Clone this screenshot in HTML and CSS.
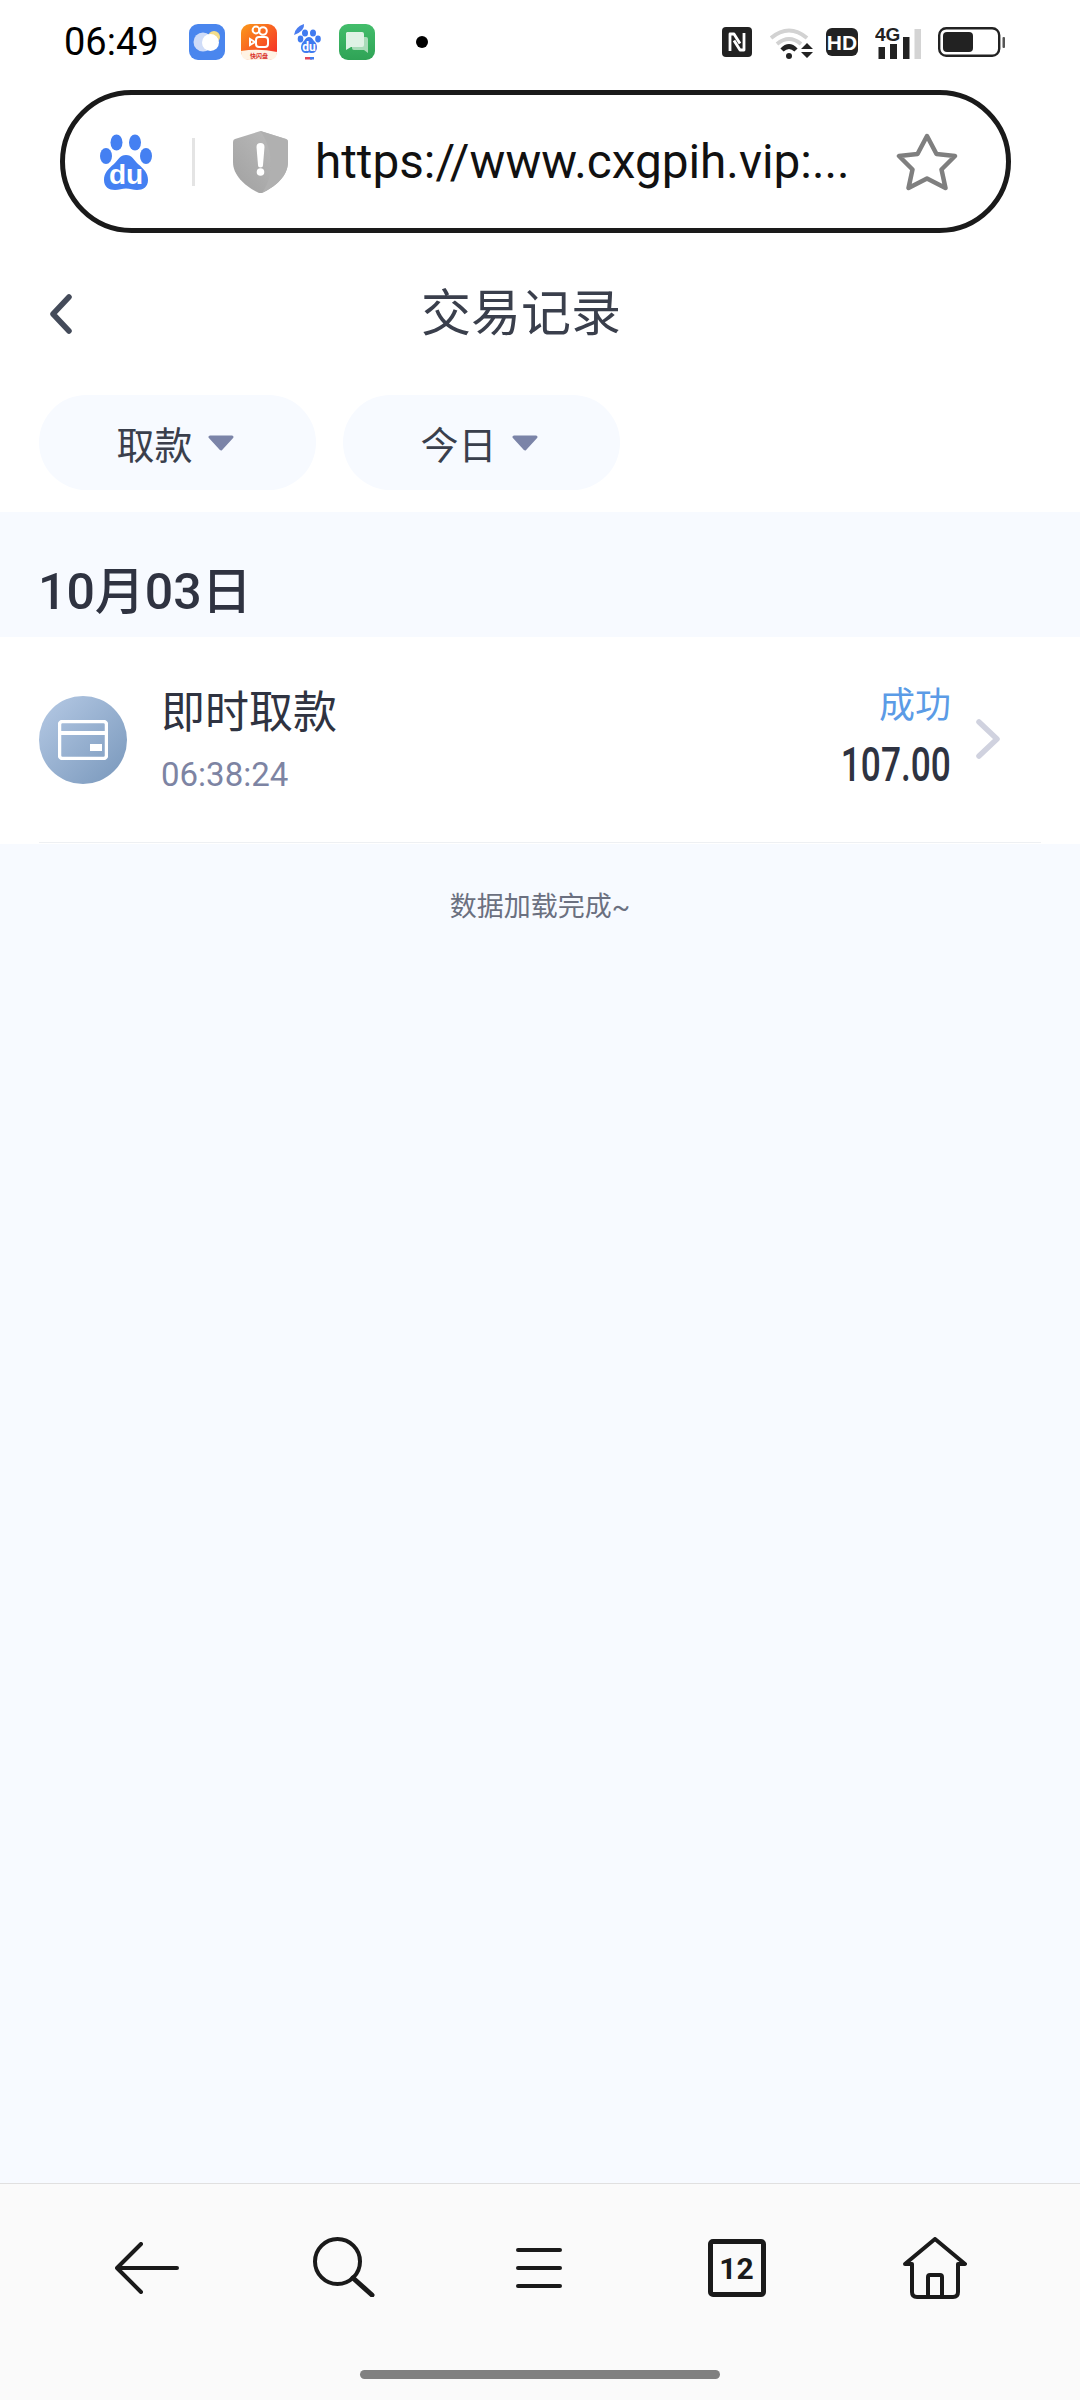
FILE: index.html
```html
<!DOCTYPE html>
<html lang="zh-CN">
<head>
<meta charset="utf-8">
<title>交易记录</title>
<link rel="stylesheet" href="styles.css">
</head>
<body>
<div class="page">
  <div class="status">
    <span class="clock">06:49</span>
    <div class="apps">
      <svg class="app" viewBox="0 0 36 36"><rect width="36" height="36" rx="9" fill="#4a86ee"/><circle cx="25" cy="13" r="6" fill="#f2dc8a"/><circle cx="14" cy="18" r="9.5" fill="#cfdcf8"/><circle cx="21.5" cy="18.5" r="8.5" fill="#fff"/></svg>
      <svg class="app" viewBox="0 0 36 36"><defs><linearGradient id="ks" x1="0" y1="0" x2="1" y2="1"><stop offset="0" stop-color="#fb9a1a"/><stop offset="1" stop-color="#f5262a"/></linearGradient></defs><rect width="36" height="36" rx="9" fill="url(#ks)"/><path d="M0 27q18 -3 36 1v0q0 8 -8 8H8q-8 0 -8-9z" fill="#fff3e4"/><circle cx="15" cy="6" r="3.4" fill="none" stroke="#fff" stroke-width="2"/><circle cx="22" cy="7" r="3.8" fill="none" stroke="#fff" stroke-width="2"/><rect x="15" y="13" width="12" height="10" rx="3" fill="none" stroke="#fff" stroke-width="2"/><path d="M14 18l-5-3v6z" fill="none" stroke="#fff" stroke-width="2"/><text x="18" y="33.5" class="ks-text">快闪盘</text></svg>
      <svg class="app-baidu" viewBox="0 0 30 36"><path d="M1 11Q2 3 11 0q1 7-10 11z" fill="#4a7df0"/><ellipse cx="12" cy="9" rx="3" ry="3.6" fill="#3f7bf0"/><ellipse cx="20" cy="9" rx="3" ry="3.6" fill="#3f7bf0"/><ellipse cx="7.500" cy="15" rx="2.800" ry="3.400" fill="#3f7bf0"/><ellipse cx="25" cy="15" rx="2.800" ry="3.400" fill="#3f7bf0"/><path d="M16 13c3 0 4 3 6 5 3 3 3 11-3 11-2 0-3-.6-3-.6s-1 .6-3 .6c-6 0-6-8-3-11 2-2 3-5 6-5z" fill="#3f7bf0"/><text x="16" y="27" class="du-small">du</text><rect x="12" y="33" width="7" height="2.500" fill="#e0475a"/><rect x="17" y="33" width="4" height="2.500" fill="#3f7bf0"/></svg>
      <svg class="app" viewBox="0 0 36 36"><defs><linearGradient id="gr" x1="0" y1="0" x2="0" y2="1"><stop offset="0" stop-color="#43bd6b"/><stop offset="1" stop-color="#2fa356"/></linearGradient></defs><rect width="36" height="36" rx="9" fill="url(#gr)"/><path d="M13 13h14a2 2 0 0 1 2 2v14l-4-3H15a2 2 0 0 1-2-2z" fill="#a9dcb9"/><path d="M8 8h15a2 2 0 0 1 2 2v11a2 2 0 0 1-2 2H12l-5 3V9z" fill="#dff2e5"/></svg>
    </div>
    <span class="dot"></span>
    <div class="sys">
      <svg class="nfc" viewBox="0 0 30 30"><rect width="30" height="30" rx="4" fill="#222"/><path d="M8 24V7h4l6 9.500M22 6V23h-4l-6-9.500" fill="none" stroke="#fff" stroke-width="2.800" stroke-linejoin="round"/></svg>
      <svg class="wifi" viewBox="0 0 44 33"><path d="M1 12Q19-3 37 12" fill="none" stroke="#d2d2d2" stroke-width="4"/><path d="M7 18Q19 8 31 18" fill="none" stroke="#d2d2d2" stroke-width="4"/><path d="M12 24Q19 17 26 24" fill="none" stroke="#222" stroke-width="4.500"/><circle cx="19" cy="30" r="3" fill="#222"/><path d="M37 17l6 6H31zM31 26h12l-6 6z" fill="#222"/></svg>
      <svg class="hd" viewBox="0 0 32 28"><rect width="32" height="28" rx="6" fill="#222"/><text x="16" y="21.500" class="hd-text">HD</text></svg>
      <svg class="signal" viewBox="0 -8 46 41"><text x="0" y="15" class="g-text">4G</text><rect x="3.500" y="21" width="6.500" height="12" fill="#222"/><rect x="15" y="18" width="7" height="15" fill="#222"/><rect x="28" y="11" width="6.500" height="22" fill="#222"/><rect x="39.500" y="3" width="6.500" height="30" fill="#d4d4d4"/></svg>
      <svg class="battery" viewBox="0 0 67 30"><rect x="1.200" y="1.200" width="60" height="27.600" rx="7" fill="none" stroke="#222" stroke-width="2.400"/><rect x="5" y="5" width="30" height="20" rx="4" fill="#222"/><rect x="64.500" y="10" width="2.500" height="11" rx="1" fill="#555"/></svg>
    </div>
  </div>

  <div class="urlbar">
    <svg class="paw" viewBox="0 0 52 56"><ellipse cx="16.500" cy="8.500" rx="6" ry="8" fill="#4480f2"/><ellipse cx="35" cy="8.500" rx="6" ry="8" fill="#4480f2"/><ellipse cx="6" cy="22" rx="6" ry="8" fill="#4480f2"/><ellipse cx="46" cy="22" rx="6" ry="8" fill="#4480f2"/><path d="M26 21c6 0 8 5 12 9 6 5 10 9 10 16 0 7-5 10-11 10-4 0-7-1.500-11-1.500S19 56 15 56C9 56 4 53 4 46c0-7 4-11 10-16 4-4 6-9 12-9z" fill="#4480f2"/><text x="26" y="50" class="du-big">du</text></svg>
    <span class="divider"></span>
    <svg class="shield" viewBox="0 0 55 62"><defs><linearGradient id="sh" x1="0" y1="1" x2="1" y2="0"><stop offset="0" stop-color="#a0a0a0"/><stop offset="1" stop-color="#bebebe"/></linearGradient></defs><path d="M27.500 0 53 8q2 .7 2 3v20c0 14-13 25-26 31h-3C13 56 0 45 0 31V11q0-2.300 2-3z" fill="url(#sh)"/><path d="M27.500 0 53 8q2 .7 2 3v20c0 14-13 25-26 31C42 44 40 18 27.500 0z" fill="#b0b0b0"/><path d="M23.500 16a4 4 0 0 1 8 0l-1.500 18a2.500 2.500 0 0 1-5 0z" fill="#fff"/><circle cx="27.500" cy="41" r="3.800" fill="#fff"/></svg>
    <span class="url">https://www.cxgpih.vip:...</span>
    <svg class="star" viewBox="0 0 62 58"><path d="M31 3 40.500 21 59 23 45.500 36.500 49.500 55 31 45.500 12.500 55 16.500 36.500 3 23 21.500 21z" fill="none" stroke="#7f7f7f" stroke-width="4.500" stroke-linejoin="round"/></svg>
  </div>

  <header class="head">
    <svg class="back" viewBox="0 0 24 40"><path d="M20 3 4 20 20 37" fill="none" stroke="#444b5a" stroke-width="5.500" stroke-linecap="round" stroke-linejoin="round"/></svg>
    <h1 class="title">交易记录</h1>
    <span></span>
  </header>

  <div class="filters">
    <div class="pill"><span>取款</span><svg class="tri" viewBox="0 0 26 16"><path d="M2 2H24L13 14z" fill="#7b84a8" stroke="#7b84a8" stroke-width="3" stroke-linejoin="round"/></svg></div>
    <div class="pill"><span>今日</span><svg class="tri" viewBox="0 0 26 16"><path d="M2 2H24L13 14z" fill="#7b84a8" stroke="#7b84a8" stroke-width="3" stroke-linejoin="round"/></svg></div>
  </div>

  <main class="main">
    <div class="date">10月03日</div>
    <div class="row">
      <div class="row-in">
        <div class="avatar">
          <svg class="card" viewBox="0 0 50 40"><rect x="1.500" y="1.500" width="47" height="37" rx="3" fill="none" stroke="#fff" stroke-width="3.500"/><rect x="2" y="11" width="46" height="4" fill="#fff"/><rect x="32" y="24" width="12" height="7" fill="#fff"/></svg>
        </div>
        <div class="info">
          <div class="name">即时取款</div>
          <div class="time">06:38:24</div>
        </div>
        <div class="side">
          <div class="state">成功</div>
          <div class="amount">107.00</div>
        </div>
        <svg class="next" viewBox="0 0 24 40"><path d="M3 3 21 20 3 37" fill="none" stroke="#d0d2df" stroke-width="5.500" stroke-linecap="round" stroke-linejoin="round"/></svg>
      </div>
    </div>
    <p class="done">数据加载完成~</p>
  </main>

  <nav class="nav">
    <div class="nav-icons">
      <span class="slot"><svg class="ni ni-back" viewBox="0 0 64 52"><path d="M26 2 2 26 26 50M2 26H62" fill="none" stroke="#1a1a1a" stroke-width="4" stroke-linecap="round" stroke-linejoin="round"/></svg></span>
      <span class="slot"><svg class="ni ni-search" viewBox="0 0 62 60"><circle cx="24.500" cy="24.500" r="22.500" fill="none" stroke="#1a1a1a" stroke-width="4"/><path d="M40 41 59 58" fill="none" stroke="#1a1a1a" stroke-width="5" stroke-linecap="round"/></svg></span>
      <span class="slot"><svg class="ni ni-menu" viewBox="0 0 46 40"><path d="M2 2H44M2 20H44M2 38H44" fill="none" stroke="#1a1a1a" stroke-width="4" stroke-linecap="round"/></svg></span>
      <span class="slot"><span class="tabs">12</span></span>
      <span class="slot"><svg class="ni ni-home" viewBox="0 0 64 62"><path d="M2 27 32 2 62 27H55V55q0 5-5 5H14q-5 0-5-5V27z" fill="none" stroke="#1a1a1a" stroke-width="4" stroke-linejoin="round"/><path d="M25 60V40q0-2 2-2h10q2 0 2 2V60" fill="none" stroke="#1a1a1a" stroke-width="4"/></svg></span>
    </div>
    <div class="indicator"></div>
  </nav>
</div>
</body>
</html>
```
FILE: styles.css
```css
* { box-sizing: border-box; }
html, body { margin: 0; padding: 0; background: #fff; }
body { font-family: Roboto, "Noto Sans CJK SC", sans-serif; color: #2f3341; }
.page { width: 1080px; height: 2400px; display: flex; flex-direction: column; overflow: hidden; }

.status { height: 84px; display: flex; align-items: center; padding-left: 64px; flex: none; }
.clock { font-size: 38px; color: #000; width: 125px; }
.apps { display: flex; align-items: center; gap: 16px; }
.app { width: 36px; height: 36px; display: block; }
.app-baidu { width: 30px; height: 36px; display: block; }
.ks-text { font-size: 6px; fill: #d8322a; text-anchor: middle; font-weight: 700; }
.du-small { font-size: 12px; fill: #fff; text-anchor: middle; font-weight: 700; }
.dot { width: 12px; height: 12px; border-radius: 50%; background: #000; margin-left: 41px; }
.sys { margin-left: auto; margin-right: 75px; display: flex; align-items: center; }
.nfc { width: 30px; height: 30px; margin-right: 18px; display: block; }
.wifi { width: 44px; height: 33px; margin-right: 12px; display: block; }
.hd { width: 32px; height: 28px; margin-right: 17px; display: block; }
.hd-text { font-size: 21px; font-weight: 700; fill: #fff; text-anchor: middle; font-family: "Liberation Sans", sans-serif; }
.signal { width: 46px; height: 41px; margin-top: -8px; margin-right: 17px; display: block; }
.g-text { font-size: 19px; font-weight: 700; fill: #222; font-family: "Liberation Sans", sans-serif; }
.battery { width: 67px; height: 30px; display: block; }

.urlbar { flex: none; margin: 6px 69px 0 60px; height: 143px; border: 5px solid #1a1a1a; border-radius: 72px; display: flex; align-items: center; padding-left: 35px; }
.paw { width: 52px; height: 56px; display: block; flex: none; }
.du-big { font-size: 28px; font-weight: 700; fill: #fff; text-anchor: middle; font-family: "Liberation Sans", sans-serif; }
.divider { width: 3px; height: 48px; background: #e4e4e4; margin-left: 40px; flex: none; }
.shield { width: 55px; height: 62px; margin-left: 38px; display: block; flex: none; }
.url { font-size: 47.7px; color: #111; margin-left: 27px; white-space: nowrap; width: 582px; flex: none; }
.star { width: 62px; height: 58px; display: block; flex: none; margin-left: -1px; }

.head { flex: none; margin-top: 41px; height: 80px; padding: 0 87px 0 49px; display: grid; grid-template-columns: 1fr auto 1fr; align-items: center; }
.back { width: 24px; height: 40px; display: block; }
.title { margin: 0; font-size: 50px; font-weight: 400; color: #3a3f4c; line-height: 80px; }

.filters { flex: none; margin-top: 41px; display: flex; gap: 27px; padding-left: 39px; }
.pill { width: 277px; height: 95px; border-radius: 48px; background: #f7faff; display: flex; align-items: center; justify-content: center; gap: 15px; padding-right: 5px; font-size: 38px; color: #3a3f4c; }
.tri { width: 26px; height: 16px; display: block; }

.main { flex: 1; margin-top: 22px; background: #f7faff; display: flex; flex-direction: column; }
.date { height: 125px; padding: 52px 0 0 38px; font-size: 50px; line-height: 56px; font-weight: 500; color: #2f3341; }
.row { background: #fff; height: 207px; padding: 0 39px; }
.row-in { height: 206px; border-bottom: 1px solid #eef0f3; display: flex; align-items: center; }
.avatar { width: 88px; height: 88px; border-radius: 50%; background: linear-gradient(135deg, #b6cae5, #7897bb); display: flex; align-items: center; justify-content: center; flex: none; }
.card { width: 50px; height: 40px; display: block; }
.info { margin-left: 34px; flex: 1; padding-top: 3px; }
.name { font-size: 44px; line-height: 50px; color: #2f3341; }
.time { font-size: 33px; line-height: 38px; margin-top: 18px; color: #7d84a3; }
.side { text-align: right; margin-top: -4px; margin-right: -1px; }
.state { font-size: 36px; line-height: 44px; color: #5b9be6; }
.amount { font-size: 49px; line-height: 52px; margin-top: 11px; font-weight: 500; color: #2f3341; transform: scaleX(0.72); transform-origin: right center; }
.next { width: 24px; height: 40px; margin: -2px 41px 0 26px; display: block; flex: none; }
.done { margin: 43px 0 0; text-align: center; font-size: 27px; line-height: 40px; color: #6b7080; }

.nav { flex: none; height: 217px; background: #fafafa; border-top: 1px solid #e0e0e0; display: flex; flex-direction: column; }
.nav-icons { display: grid; grid-template-columns: repeat(5, 197px); padding: 50px 0 0 48px; height: 186px; }
.slot { display: flex; justify-content: center; align-items: flex-start; height: 64px; }
.ni { display: block; }
.ni-back { width: 64px; height: 52px; margin-top: 8px; }
.ni-search { width: 62px; height: 60px; margin-top: 3px; }
.ni-menu { width: 46px; height: 40px; margin-top: 14px; margin-right: 4px; }
.ni-home { width: 64px; height: 62px; margin-top: 3px; }
.tabs { width: 58px; height: 58px; margin-top: 5px; margin-right: 2px; border: 5px solid #1a1a1a; border-radius: 5px; font-size: 30px; font-weight: 700; color: #1a1a1a; display: flex; align-items: center; justify-content: center; }
.indicator { width: 360px; height: 9px; border-radius: 5px; background: #808080; margin: 0 auto; }
```
